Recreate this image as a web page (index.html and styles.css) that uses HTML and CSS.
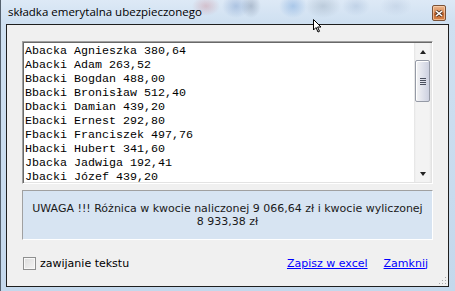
FILE: index.html
```html
<!DOCTYPE html>
<html lang="pl">
<head>
  <meta charset="UTF-8">
  <title>składka emerytalna ubezpieczonego</title>
  <link rel="stylesheet" href="styles.css">
</head>
<body>
  <div class="window">
    <div class="titlebar">
      <span class="title">składka emerytalna ubezpieczonego</span>
      <button class="close" title="Zamknij">
        <svg width="8" height="7" viewBox="0 0 8 7">
          <path d="M1 1 L7 6 M7 1 L1 6" stroke="#4a3020" stroke-width="3"/>
          <path d="M1 1 L7 6 M7 1 L1 6" stroke="#fff" stroke-width="1.6"/>
        </svg>
      </button>
    </div>

    <div class="client">
      <div class="listbox">
        <div class="lines">
          <div>Abacka Agnieszka 380,64</div>
          <div>Abacki Adam 263,52</div>
          <div>Bbacki Bogdan 488,00</div>
          <div>Bbacki Bronisław 512,40</div>
          <div>Dbacki Damian 439,20</div>
          <div>Ebacki Ernest 292,80</div>
          <div>Fbacki Franciszek 497,76</div>
          <div>Hbacki Hubert 341,60</div>
          <div>Jbacka Jadwiga 192,41</div>
          <div>Jbacki Józef 439,20</div>
        </div>
        <div class="scrollbar">
          <div class="arrow up"></div>
          <div class="track">
            <div class="thumb"><span></span><span></span><span></span><span></span></div>
          </div>
          <div class="arrow down"></div>
        </div>
      </div>

      <div class="warning">
        UWAGA !!! Różnica w kwocie naliczonej 9 066,64 zł i kwocie wyliczonej<br>
        8 933,38 zł
      </div>

      <div class="footer">
        <label class="wrap"><span class="checkbox"></span>zawijanie tekstu</label>
        <div class="links">
          <a href="#">Zapisz w excel</a>
          <a href="#">Zamknij</a>
        </div>
      </div>
      <div class="grip"></div>
    </div>

    <svg class="cursor" width="9" height="14" viewBox="0 0 9 14">
      <path d="M0.5 0.5 L0.5 11 L3 8.5 L5 13 L6.5 12.3 L4.6 8 L8 8 Z" fill="#fff" stroke="#000" stroke-width="1"/>
    </svg>
  </div>
</body>
</html>
```

FILE: styles.css
```css
body {
  margin: 0;
  background: #fff;
}
.window {
  position: relative;
  width: 455px;
  height: 291px;
  box-sizing: border-box;
  border-left: 1px solid #55616e;
  background:
    radial-gradient(ellipse 14px 10px at 205px 6px, rgba(200, 120, 130, 0.35), transparent),
    radial-gradient(ellipse 14px 12px at 235px 6px, rgba(90, 130, 190, 0.35), transparent),
    radial-gradient(ellipse 10px 12px at 250px 6px, rgba(70, 90, 120, 0.3), transparent),
    radial-gradient(ellipse 14px 12px at 292px 6px, rgba(80, 140, 210, 0.35), transparent),
    radial-gradient(ellipse 18px 12px at 322px 6px, rgba(120, 140, 160, 0.3), transparent),
    radial-gradient(ellipse 14px 10px at 355px 6px, rgba(120, 150, 190, 0.25), transparent),
    radial-gradient(ellipse 16px 10px at 395px 6px, rgba(150, 170, 200, 0.25), transparent),
    linear-gradient(to bottom, #dde9f6 0, #cfe0f1 22px, #c4d8ec 100%);
  font-family: "DejaVu Sans", Tahoma, sans-serif;
  font-size: 11px;
  color: #000;
  overflow: hidden;
}
.titlebar {
  display: flex;
  align-items: flex-start;
  justify-content: space-between;
  height: 24px;
  padding-left: 7px;
  padding-right: 9px;
}
.title {
  font-family: "Open Sans", "Noto Sans", sans-serif;
  font-size: 11.5px;
  line-height: 16px;
  margin-top: 4px;
  color: #000;
}
.close {
  margin-top: 5px;
  width: 14px;
  height: 16px;
  padding: 0;
  border: 1px solid #7a5238;
  border-radius: 2px;
  background: linear-gradient(to bottom, #ecb78e 0, #d98c58 45%, #c0622c 55%, #d9864a 100%);
  box-shadow: inset 0 0 0 1px rgba(255, 220, 190, 0.6);
  display: flex;
  align-items: center;
  justify-content: center;
}
.client {
  position: relative;
  box-sizing: border-box;
  margin-left: 5px;
  width: 443px;
  height: 263px;
  border: 1px solid #1e1e1e;
  background: #f0f0f0;
  padding: 16px 15px 0 15px;
  display: flex;
  flex-direction: column;
}
.listbox {
  display: flex;
  height: 139px;
  border-top: 1px solid #a0a0a0;
  border-left: 1px solid #a0a0a0;
  border-right: 1px solid #fff;
  border-bottom: 1px solid #fff;
  box-shadow: inset 1px 1px 0 #696969, inset -1px -1px 0 #e3e3e3;
  background: #fff;
  padding: 1px;
}
.lines {
  flex: 1;
  overflow: hidden;
  padding: 1px 0 0 1px;
  font-family: "Liberation Mono", "Courier New", monospace;
  font-size: 11.67px;
  line-height: 14px;
  white-space: nowrap;
}
.scrollbar {
  width: 17px;
  display: flex;
  flex-direction: column;
  background: linear-gradient(to right, #e4e4e4 0, #f3f3f3 2px, #f3f3f3 15px, #e8e8e8 17px);
}
.arrow {
  height: 17px;
  display: flex;
  align-items: center;
  justify-content: center;
}
.arrow::before {
  content: "";
  border-left: 3.5px solid transparent;
  border-right: 3.5px solid transparent;
}
.arrow.up::before {
  border-bottom: 4px solid #222;
}
.arrow.down::before {
  border-top: 4px solid #222;
}
.track {
  flex: 1;
}
.thumb {
  height: 40px;
  margin: 0 1px;
  border: 1px solid #959aa6;
  border-radius: 2px;
  background: linear-gradient(to right, #f4f4f4 0, #e4e6ee 40%, #cdd1e0 100%);
  box-shadow: inset 1px 1px 0 #fff;
  display: flex;
  flex-direction: column;
  align-items: center;
  justify-content: center;
  gap: 1px;
}
.thumb span {
  width: 6px;
  height: 1px;
  background: #4a4f5e;
}
.warning {
  margin-top: 6px;
  height: 37px;
  padding-top: 11px;
  border-top: 1px solid #a0a0a0;
  border-left: 1px solid #a0a0a0;
  border-right: 1px solid #fff;
  border-bottom: 1px solid #fff;
  background: #d7e4f2;
  text-align: center;
  line-height: 13px;
  color: #1a1a1a;
}
.footer {
  display: flex;
  align-items: center;
  justify-content: space-between;
  margin-top: 16px;
  height: 14px;
  padding-left: 1px;
  padding-right: 5px;
}
.wrap {
  display: flex;
  align-items: center;
  gap: 4px;
}
.checkbox {
  width: 11px;
  height: 11px;
  border: 1px solid #8e8f8f;
  background: linear-gradient(135deg, #dcdcdc 0, #f4f4f4 100%);
  box-shadow: inset 0 0 0 1px #f8f8f8;
}
.links {
  display: flex;
  gap: 16px;
}
.links a {
  color: #0000ff;
}
.grip {
  position: absolute;
  right: 2px;
  bottom: 2px;
  width: 8px;
  height: 8px;
  background: radial-gradient(circle, #a8a8a8 0.8px, transparent 1px) 0 0 / 3px 3px;
  clip-path: polygon(100% 0, 100% 100%, 0 100%);
}
.cursor {
  position: absolute;
  left: 312px;
  top: 19px;
}
```
